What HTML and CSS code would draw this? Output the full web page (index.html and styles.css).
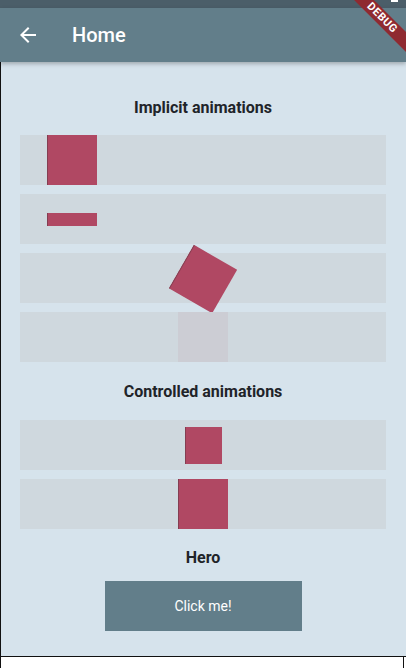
FILE: index.html
```html
<!DOCTYPE html>
<html>
<head>
<meta charset="utf-8">
<link rel="stylesheet" href="styles.css">
</head>
<body>
<div class="screen">
  <div class="status"><span class="time">10:57</span><span class="batt"></span></div>
  <header class="appbar">
    <svg class="back" width="24" height="24" viewBox="0 0 24 24"><path fill="#fff" d="M20 11H7.83l5.59-5.59L12 4l-8 8 8 8 1.41-1.41L7.83 13H20v-2z"/></svg>
    <h1 class="title">Home</h1>
  </header>
  <main class="content">
    <h2 class="section first">Implicit animations</h2>
    <div class="rows">
      <div class="row"><div class="sq left"></div></div>
      <div class="row row-center-v"><div class="bar left"></div></div>
      <div class="row row-center"><div class="sq rot"></div></div>
      <div class="row row-center"><div class="sq faint"></div></div>
    </div>
    <h2 class="section">Controlled animations</h2>
    <div class="rows">
      <div class="row row-center"><div class="sq small"></div></div>
      <div class="row row-center"><div class="sq"></div></div>
    </div>
    <h2 class="section hero">Hero</h2>
    <div class="btnwrap"><button class="btn">Click me!</button></div>
  </main>
  <div class="foot"></div>
  <div class="debug">DEBUG</div>
</div>
</body>
</html>
```
FILE: styles.css
```css
html, body { margin: 0; padding: 0; background: #fff; }
body { font-family: Roboto, "Noto Sans", sans-serif; }
.screen { position: relative; width: 406px; height: 668px; overflow: hidden; display: flex; flex-direction: column; }
.status { height: 8px; background: #4b5e69; position: relative; overflow: hidden; flex: none; }
.time { position: absolute; left: 12px; top: -10px; color: #fff; font-size: 12px; font-weight: 500; line-height: 12px; }
.batt { position: absolute; right: 8px; top: -6px; width: 7px; height: 8px; background: #fff; }
.appbar { height: 54px; background: #627e8a; display: flex; align-items: center; box-shadow: 0 2px 4px rgba(0,0,0,0.25); position: relative; z-index: 2; flex: none; }
.back { margin-left: 16px; }
.title { margin: 0 0 0 32px; color: #fff; font-size: 20px; font-weight: 500; line-height: 24px; }
.content { height: 594px; background: #d6e3ec; border-left: 1px solid #111; border-bottom: 1px solid #111; padding: 0 20px 0 19px; flex: none; }
.section { margin: 20px 0 18px; text-align: center; font-size: 16px; font-weight: 700; color: #1f2429; line-height: 20px; }
.section.first { margin-top: 36px; margin-bottom: 17px; }
.section.hero { margin: 19px 0 13px; }
.rows { display: flex; flex-direction: column; gap: 9px; }
.row { height: 50px; background: #cfd8de; display: flex; position: relative; }
.row-center { justify-content: center; align-items: center; }
.row-center-v { align-items: center; }
.sq { width: 50px; height: 50px; background: #b04863; box-shadow: inset 1px 0 0 rgba(80,50,60,0.45); }
.left { margin-left: 27px; }
.bar { width: 50px; height: 13px; background: #b04863; box-shadow: inset 1px 0 0 rgba(80,50,60,0.45); }
.rot { transform: rotate(30deg); margin-top: 2px; }
.faint { background: rgba(176,72,99,0.08); box-shadow: none; }
.small { width: 37px; height: 37px; }
.btnwrap { display: flex; justify-content: center; }
.btn { width: 197px; height: 50px; border: none; background: #627e8a; color: #fff; font-family: Roboto, sans-serif; font-size: 14px; padding: 0; }
.foot { flex: 1; border-left: 1px solid #111; border-right: 1px solid #111; margin-right: 2px; background: #fff; }
.debug { position: absolute; left: 330px; top: 11px; width: 104px; height: 14px; line-height: 14px; transform: rotate(45deg); background: #8f2a31; color: #fff; font-size: 11px; font-weight: 700; text-align: center; letter-spacing: 0.5px; z-index: 5; }
```
